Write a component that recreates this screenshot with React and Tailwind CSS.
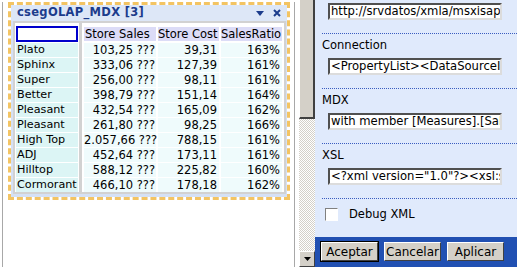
import React from 'react';

const rows = [
  ['Plato', '103,25 ???', '39,31', '163%'],
  ['Sphinx', '333,06 ???', '127,39', '161%'],
  ['Super', '256,00 ???', '98,11', '161%'],
  ['Better', '398,79 ???', '151,14', '164%'],
  ['Pleasant', '432,54 ???', '165,09', '162%'],
  ['Pleasant', '261,80 ???', '98,25', '166%'],
  ['High Top', '2.057,66 ???', '788,15', '161%'],
  ['ADJ', '452,64 ???', '173,11', '161%'],
  ['Hilltop', '588,12 ???', '225,82', '160%'],
  ['Cormorant', '466,10 ???', '178,18', '162%'],
];

// campo de texto estilo clasico (borde hundido)
function Field({ value }) {
  return (
    <div className="ml-[13px] w-[174px] h-[17px] bg-white border-2 border-t-[#505050] border-l-[#505050] border-r-[#dcdcdc] border-b-[#dcdcdc] overflow-hidden whitespace-nowrap text-[11.6px] leading-[13px] pl-[1px]">
      {value}
    </div>
  );
}

function Section({ label, value }) {
  return (
    <>
      <div className="ml-[7px] border-t border-dotted border-[#3a5cc0]" />
      <div className="ml-[7px] h-[24px] flex items-center">{label}</div>
      <Field value={value} />
      <div className="h-[13px]" />
    </>
  );
}

function WinButton({ children, isDefault }) {
  return (
    <div className={isDefault ? 'border border-black' : 'border border-transparent'}>
      <div className="w-[57px] h-[19px] bg-[#d4d0c8] border border-t-white border-l-white border-r-[#404040] border-b-[#404040] flex items-center justify-center text-[12px] leading-none">
        {children}
      </div>
    </div>
  );
}

export default function App() {
  return (
    <div className="w-[517px] h-[267px] flex bg-white overflow-hidden text-[11.5px] text-black" style={{ fontFamily: '"DejaVu Sans", Verdana, sans-serif' }}>
      {/* area izquierda con el portlet */}
      <div className="w-[296px] h-full shrink-0">
        <div className="ml-[2px] w-[293px] h-full border-x border-[#a8a8a8]">
          <div className="ml-[5px] mt-[2px] w-[282px] h-[198px] border-[3px] border-dashed border-[#f3c463]">
            <div className="bg-[#d5e1f5] pl-[2px] pr-[1px] pb-[2px] h-full">
              <div className="h-[16px] -ml-[2px] -mr-[1px] pl-[6px] pr-[6px] bg-[#dde7f7] flex items-center justify-between">
                <span className="font-bold text-[11.5px] text-[#1c3c8c] tracking-[0.3px]">csegOLAP_MDX [3]</span>
                <div className="flex items-center gap-[9px]">
                  <svg width="8" height="5" viewBox="0 0 8 5"><path d="M0 0h8L4 5z" fill="#1c3c8c" /></svg>
                  <svg width="8" height="8" viewBox="0 0 8 8"><path d="M1 1l6 6M7 1L1 7" stroke="#1c3c8c" strokeWidth="2" /></svg>
                </div>
              </div>
              <div className="flex bg-white border-2 border-[#d2d2d2] pl-[1px] pr-[1px]">
                <div className="w-[62px] pt-[3px] flex flex-col gap-[1px]">
                  <div className="h-[16px] border-2 border-[#0000cc] bg-white" />
                  {rows.map((r, i) => (
                    <div key={i} className="h-[14px] bg-[#dcf5f5] pl-[1px] text-[11.2px] leading-[14px] whitespace-nowrap overflow-hidden">{r[0]}</div>
                  ))}
                </div>
                <div className="ml-[1px] w-[3px] bg-[#d2d2d2]" />
                <div className="ml-[2px] pt-[3px] flex flex-col gap-[1px]">
                  <div className="h-[16px] flex items-center gap-[2px]">
                    <div className="w-[72px] h-[14px] bg-[#dcdcf7] pl-[1px] leading-[14px] whitespace-nowrap overflow-hidden">Store Sales</div>
                    <div className="w-[61px] h-[14px] bg-[#dcdcf7] leading-[14px] whitespace-nowrap overflow-hidden">Store Cost</div>
                    <div className="w-[61px] h-[14px] bg-[#dcdcf7] leading-[14px] whitespace-nowrap overflow-hidden">SalesRatio</div>
                  </div>
                  {rows.map((r, i) => (
                    <div key={i} className="h-[14px] flex gap-[2px] leading-[14px]">
                      <div className="w-[72px] bg-[#effbfc] text-right pr-[1px] whitespace-nowrap">{r[1]}</div>
                      <div className="w-[61px] bg-[#effbfc] text-right pr-[2px]">{r[2]}</div>
                      <div className="w-[61px] bg-[#effbfc] text-right pr-[2px]">{r[3]}</div>
                    </div>
                  ))}
                </div>
              </div>
            </div>
          </div>
        </div>
      </div>

      {/* barra de desplazamiento */}
      <div className="ml-[3px] w-[16px] h-full shrink-0 flex flex-col justify-between bg-[repeating-conic-gradient(#d4d0c8_0%_25%,#ffffff_0%_50%)] bg-[length:2px_2px]">
        <div className="h-[119px] bg-[#d4d0c8] border-r-2 border-b-2 border-r-[#404040] border-b-[#404040] border-l border-l-white" />
        <div className="h-[16px] bg-[#d4d0c8] border border-t-white border-l-white border-r-[#404040] border-b-[#404040] flex items-center justify-center">
          <svg width="7" height="4" viewBox="0 0 7 4"><path d="M0 0h7L3.5 4z" fill="#000" /></svg>
        </div>
      </div>

      {/* panel de propiedades */}
      <div className="w-[202px] h-full flex flex-col bg-[#e0eafc]">
        <div className="flex-1 pt-[3px]">
          <Field value="http://srvdatos/xmla/msxisapi.dll" />
          <div className="h-[13px]" />
          <Section label="Connection" value="<PropertyList><DataSourceInfo>" />
          <Section label="MDX" value="with member [Measures].[SalesRatio]" />
          <Section label="XSL" value={'<?xml version="1.0"?><xsl:stylesheet'} />
          <div className="ml-[7px] border-t border-dotted border-[#3a5cc0]" />
          <div className="flex items-center ml-[10px] mt-[7px]">
            <div className="w-[13px] h-[13px] bg-white border border-t-[#808080] border-l-[#808080] border-r-white border-b-white" />
            <span className="ml-[11px]">Debug XML</span>
          </div>
        </div>
        <div className="h-[30px] bg-[#2150b2] flex items-start gap-[4px] pl-[5px] pt-[4px]">
          <WinButton isDefault>Aceptar</WinButton>
          <WinButton>Cancelar</WinButton>
          <WinButton>Aplicar</WinButton>
        </div>
      </div>
    </div>
  );
}
